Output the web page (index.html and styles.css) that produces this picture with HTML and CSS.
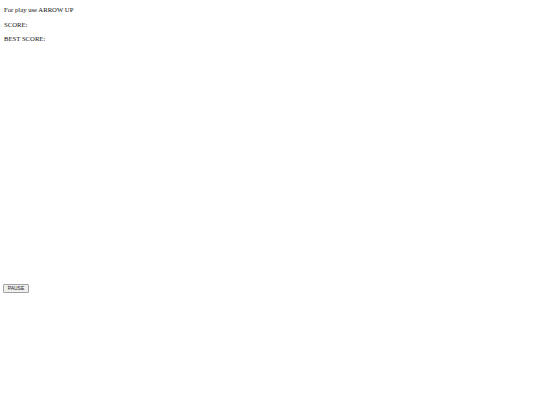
FILE: index.html
```html
<!DOCTYPE html>
<html lang="en">

<head>
  <title>jump game</title>
  <link rel="stylesheet" href="styles.css">
</head>

<body>
  <div class="info">
    <p>For play use ARROW UP</p>
    <p>SCORE: <span id="score"></span></p>
    <p>BEST SCORE: <span id="best"></span></p>
  </div>

  <!-- game field -->
  <div id="game" class="game"></div>

  <button class="pause-btn">PAUSE</button>
</body>
</html>
```

FILE: styles.css
```css
body {
  font-family: "Liberation Serif", serif;
  font-size: 6.7px;
  color: #111;
  background-color: #fff;
  margin: 3px 3px;
}

.info p {
  margin: 0;
  line-height: 14.5px;
  padding-left: 1px;
}

.game {
  height: 237px;
}

.pause-btn {
  display: block;
  font-family: "Liberation Sans", Arial, sans-serif;
  font-size: 5px;
  height: 9px;
  width: 26px;
  padding: 0;
  background-color: #efefef;
  border: 1px solid #a0a0a0;
  border-radius: 1px;
  color: #222;
}
```
